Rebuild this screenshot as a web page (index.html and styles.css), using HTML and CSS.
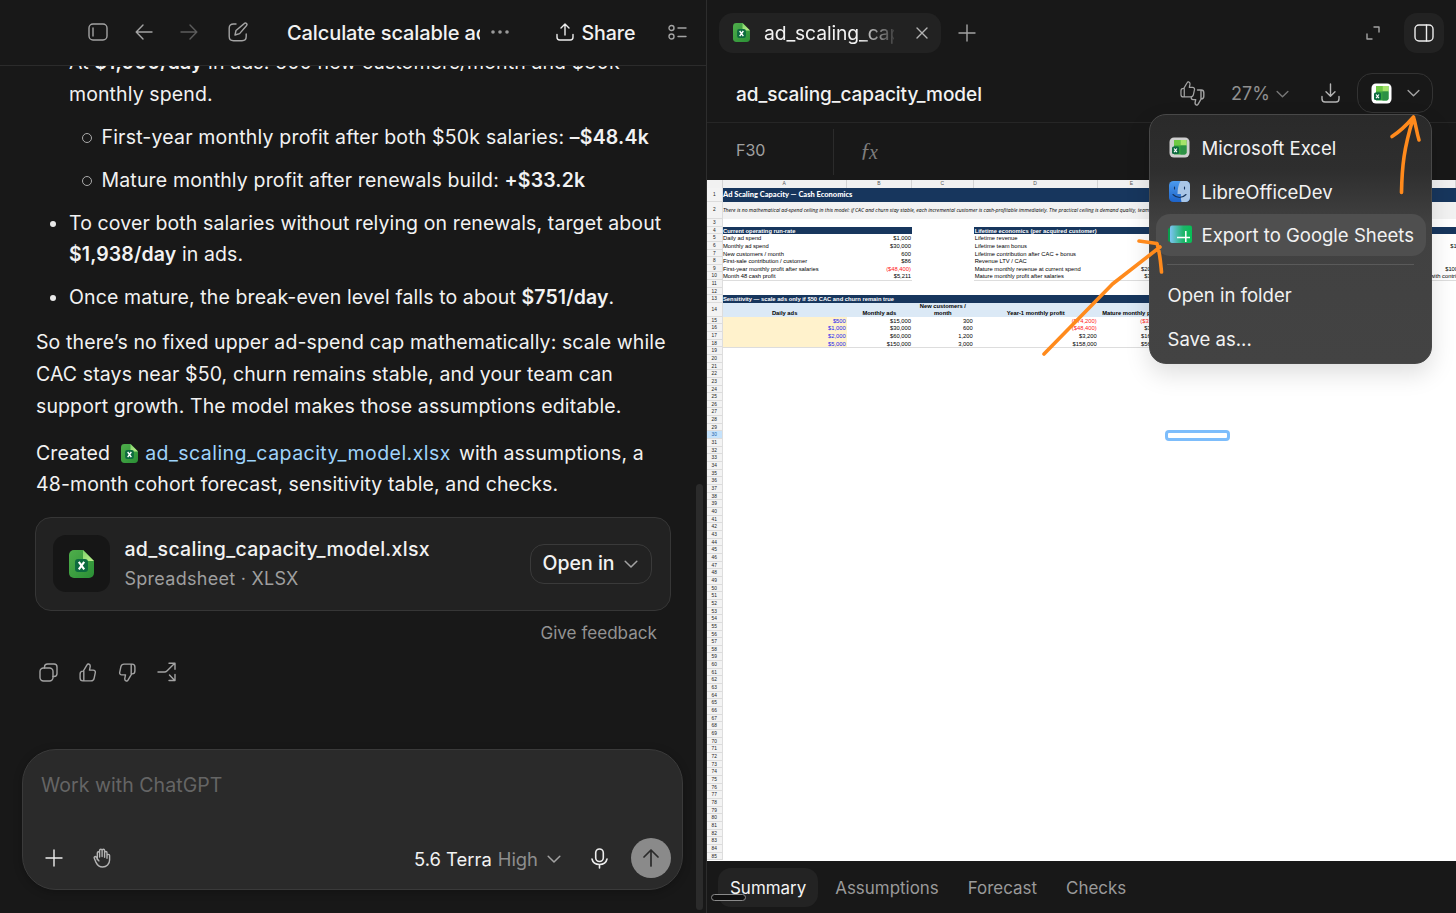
FILE: index.html
```html
<!DOCTYPE html>
<html lang="en">
<head>
<meta charset="utf-8">
<title>ad_scaling_capacity_model</title>
<link rel="stylesheet" href="styles.css">
</head>
<body>
<svg class="defs" width="0" height="0" aria-hidden="true">
  <defs>
    <linearGradient id="gFile" x1="0" y1="0" x2="1" y2="1"><stop offset="0" stop-color="#4fae4b"/><stop offset="1" stop-color="#2a8f35"/></linearGradient>
    <linearGradient id="gFold" x1="0" y1="0" x2="1" y2="1"><stop offset="0" stop-color="#7fd36a"/><stop offset="1" stop-color="#c3f08f"/></linearGradient>
    <linearGradient id="gSheet" x1="0" y1="0" x2="1" y2="0"><stop offset="0" stop-color="#7cc4f4"/><stop offset=".6" stop-color="#1fb56b"/><stop offset="1" stop-color="#06bf55"/></linearGradient>
    <linearGradient id="gFinder" x1="0" y1="0" x2="0" y2="1"><stop offset="0" stop-color="#4b9bee"/><stop offset="1" stop-color="#1d63c9"/></linearGradient>
    <symbol id="file" viewBox="0 0 25 28">
      <path d="M5 0h9l11 11v12a5 5 0 0 1-5 5H5a5 5 0 0 1-5-5V5a5 5 0 0 1 5-5z" fill="url(#gFile)"/>
      <path d="M14 0l11 11h-8a3 3 0 0 1-3-3z" fill="url(#gFold)"/>
      <rect x="6" y="9" width="13" height="13" rx="3" fill="#0d6b3f"/>
      <path d="M9.800 11.800l5.400 7.600M15.200 11.800l-5.400 7.600" stroke="#fff" stroke-width="2.100" fill="none"/>
    </symbol>
    <symbol id="excel" viewBox="0 0 21 21">
      <rect x=".5" y=".5" width="20" height="20" rx="4.500" fill="currentColor"/>
      <path d="M5 3h12.500v12.500a2 2 0 0 1-2 2H5z" fill="#37a23f"/>
      <path d="M5 3h6.500v5.500H5z" fill="#6fc944"/><path d="M11.500 3h6v5.500h-6z" fill="#a6e36b"/>
      <path d="M11.500 8.500h6v7a2 2 0 0 1-2 2h-4z" fill="#2d9145"/>
      <rect x="3" y="9.500" width="7" height="7.500" rx="1.500" fill="#0f6b41"/>
      <path d="M5.100 11.500l2.800 3.600M7.900 11.500l-2.800 3.600" stroke="#fff" stroke-width="1.200"/>
    </symbol>
    <symbol id="chev" viewBox="0 0 14 8"><path d="M1.200 1.200L7 7l5.800-5.800" fill="none" stroke="currentColor" stroke-width="1.500" stroke-linecap="round" stroke-linejoin="round"/></symbol>
    <symbol id="thumb" viewBox="0 0 18 19">
      <path d="M4.300 8.200L8 1.900c.4-.8 1-1.100 1.700-.9 1.200.4 1.700 1.400 1.500 2.600l-.7 3.500h3.700c1.500 0 2.400 1.200 2.100 2.600l-1.200 5.600c-.4 1.700-1.400 2.600-3.100 2.600H4.800M4.800 8.100v9.800H3.900c-1.700 0-2.800-1.200-2.800-2.900v-4c0-1.700 1.100-2.900 2.800-2.900z" fill="none" stroke="currentColor" stroke-width="1.400" stroke-linejoin="round" stroke-linecap="round"/>
    </symbol>
  </defs>
</svg>

<div class="app">
  <section class="chat">
    <header class="chat-head">
      <div class="nav">
        <svg class="ic" width="20" height="18" viewBox="0 0 20 18"><rect x="1" y="1" width="18" height="16" rx="4"/><path d="M5 5v8"/></svg>
        <svg class="ic" width="18" height="16" viewBox="0 0 18 16"><path d="M17 8H1.500M8 1L1.200 8 8 15"/></svg>
        <svg class="ic dim" width="18" height="16" viewBox="0 0 18 16"><path d="M1 8h15.500M10 1l6.800 7L10 15"/></svg>
        <svg class="ic" width="20" height="20" viewBox="0 0 20 20"><path d="M8 2H5.500C2.800 2 1.200 3.500 1.200 6v8.500c0 2.600 1.600 4.200 4.300 4.200H14c2.700 0 4.200-1.600 4.200-4.200V12"/><path d="M16.200 1.600c.8-.8 1.700-.7 2.300-.1s.6 1.600-.1 2.300L11.600 11.600 7 13l1-4.500z"/></svg>
      </div>
      <div class="chat-title"><span>Calculate scalable ad</span></div>
      <svg class="dots" width="18" height="4" viewBox="0 0 18 4"><circle cx="2" cy="2" r="1.800"/><circle cx="9" cy="2" r="1.800"/><circle cx="16" cy="2" r="1.800"/></svg>
      <div class="share">
        <svg class="ic bright" width="18" height="18" viewBox="0 0 18 18"><path d="M9 12V1.500M5 5l4-4 4 4M1 11.500v2.800C1 16 2 17 3.700 17h10.600c1.700 0 2.700-1 2.700-2.700v-2.800"/></svg>
        <span>Share</span>
      </div>
      <svg class="ic list" width="19" height="17" viewBox="0 0 19 17"><circle cx="3.500" cy="4" r="2.500"/><circle cx="3.500" cy="12.500" r="2.500"/><path d="M10 4h8M10 12.500h8"/></svg>
    </header>

    <div class="thread">
      <ul class="list1">
        <li><span class="l1">At <b>$1,000/day</b> in ads: 600 new customers/month and $30k</span><br>monthly spend.
          <ul class="list2">
            <li>First-year monthly profit after both $50k salaries: <b>–$48.4k</b></li>
            <li>Mature monthly profit after renewals build: <b>+$33.2k</b></li>
          </ul>
        </li>
        <li>To cover both salaries without relying on renewals, target about<br><b>$1,938/day</b> in ads.</li>
        <li>Once mature, the break-even level falls to about <b>$751/day</b>.</li>
      </ul>
      <p class="para">So there’s no fixed upper ad-spend cap mathematically: scale while<br>CAC stays near $50, churn remains stable, and your team can<br>support growth. The model makes those assumptions editable.</p>
      <p class="para second">Created <svg class="inline-file" width="17" height="19"><use href="#file"/></svg><a class="link">ad_scaling_capacity_model.xlsx</a> with assumptions, a<br>48-month cohort forecast, sensitivity table, and checks.</p>
      <div class="card">
        <div class="card-icon"><svg width="25" height="28"><use href="#file"/></svg></div>
        <div class="card-text"><div class="card-name">ad_scaling_capacity_model.xlsx</div><div class="card-sub">Spreadsheet · XLSX</div></div>
        <div class="open-in"><span>Open in</span><svg class="chev" width="14" height="8"><use href="#chev"/></svg></div>
      </div>
      <div class="feedback">Give feedback</div>
      <div class="actions">
        <svg class="ic" width="19" height="19" viewBox="0 0 19 19"><rect x="1" y="5" width="13" height="13" rx="3.500"/><path d="M5.500 5V4c0-2 1-3 3-3H15c2 0 3 1 3 3v6.500c0 2-1 3-3 3h-1"/></svg>
        <svg class="ic" width="18" height="19"><use href="#thumb"/></svg>
        <svg class="ic flip" width="18" height="19"><use href="#thumb"/></svg>
        <svg class="ic" width="19" height="20" viewBox="0 0 19 20"><path d="M1 10h6.500c1 0 1.700-.3 2.400-1L17.500 1.500M12 1.200h6v6M12.500 13l5 5.200M18 12.500v6h-6"/></svg>
      </div>
    </div>

    <div class="composer">
      <div class="placeholder">Work with ChatGPT</div>
      <div class="composer-row">
        <svg class="ic bright plus" width="18" height="18" viewBox="0 0 18 18"><path d="M9 1v16M1 9h16"/></svg>
        <svg class="ic soft hand" width="18" height="20" viewBox="0 0 18 20"><path d="M4.300 11.800V5c0-1.700 2.300-1.700 2.300 0v4M6.600 8V2.600c0-1.800 2.500-1.800 2.500 0V8.500M9.100 8V2.600c0-1.800 2.500-1.800 2.500 0v6.600M11.600 8V4.700c0-1.600 2.400-1.600 2.400 0v5.500M14 7.600c0-1.600 2.600-1.600 2.600 0V12c0 4-3 7-7 7-3.500 0-5.300-1.800-6.600-4.600L1.300 10.300c-.7-1.700 1.300-2.300 2-1l2.600 3.600"/></svg>
        <div class="model"><span>5.6 Terra</span><span class="high">High</span><svg class="chev" width="14" height="8"><use href="#chev"/></svg></div>
        <svg class="ic bright mic" width="17" height="21" viewBox="0 0 17 21"><rect x="4.700" y="1" width="7.600" height="12.500" rx="3.800"/><path d="M1 11c.8 3.600 3.600 5.500 7.500 5.500S15.200 14.600 16 11M8.500 16.500V20"/></svg>
        <div class="send"><svg width="18" height="18" viewBox="0 0 18 18"><path d="M9 17V1.500M2 8l7-7 7 7"/></svg></div>
      </div>
    </div>
    <div class="scroll-thumb"></div>
  </section>

  <section class="pane">
    <div class="tabs">
      <div class="tab"><svg width="17" height="19"><use href="#file"/></svg><span class="tab-name">ad_scaling_cap</span><svg class="ic soft" width="12" height="12" viewBox="0 0 12 12"><path d="M1 1l10 10M11 1L1 11"/></svg></div>
      <svg class="ic add" width="18" height="18" viewBox="0 0 18 18"><path d="M9 1v16M1 9h16"/></svg>
      <svg class="ic expand" width="14" height="14" viewBox="0 0 14 14"><path d="M8 1h5v5M1 8v5h5"/></svg>
      <div class="side-btn"><svg class="ic bright" width="20" height="18" viewBox="0 0 20 18"><rect x="1" y="1" width="18" height="16" rx="4"/><path d="M12.500 1v16"/></svg></div>
    </div>
    <div class="toolbar">
      <div class="doc-title">ad_scaling_capacity_model</div>
      <svg class="ic thumbs" width="25" height="25" viewBox="0 0 25 25"><use href="#thumb" x="0" y="0" width="16" height="17"/><path d="M17.500 9h3.700c1.700 0 2.600 1 2.600 2.700v3.600c0 1.700-1 2.700-2.700 2.700L18 23.300c-.4.800-1 .9-1.600.7-1.100-.4-1.500-1.300-1.300-2.400l.6-3H13c-1.200 0-1.800-.8-1.700-1.800M21 9v9"/></svg>
      <div class="zoom"><span>27%</span><svg class="chev" width="13" height="8"><use href="#chev"/></svg></div>
      <svg class="ic soft down" width="19" height="20" viewBox="0 0 19 20"><path d="M9.500 1v12M5 8.700l4.500 4.500L14 8.700M1 13.500v2.300C1 17.900 2 19 4 19h11c2 0 3-1.100 3-3.200v-2.300"/></svg>
      <div class="app-btn"><svg class="xl" width="21" height="21"><use href="#excel"/></svg><svg class="chev" width="13" height="8"><use href="#chev"/></svg></div>
    </div>
    <div class="formula"><div class="ref">F30</div><div class="fx">ƒ<i>x</i></div></div>

    <div class="sheet">
      <div class="cols"><span></span><span>A</span><span>B</span><span>C</span><span>D</span><span>E</span><span>F</span><span>G</span></div>
      <div class="body">
        <div class="nums" id="nums"></div>
        <div class="cells">
          <div class="r r1"><span>Ad Scaling Capacity — Cash Economics</span></div>
          <div class="r r2"><span>There is no mathematical ad-spend ceiling in this model: if CAC and churn stay stable, each incremental customer is cash-profitable immediately. The practical ceiling is demand quality, team</span></div>
          <div class="r"></div>
          <div class="r g head"><b class="navy ab">Current operating run-rate</b><b class="navy dg">Lifetime economics (per acquired customer)</b></div>
          <div class="r g"><span>Daily ad spend</span><span class="n">$1,000</span><span></span><span>Lifetime revenue</span></div>
          <div class="r g"><span>Monthly ad spend</span><span class="n">$30,000</span><span></span><span>Lifetime team bonus</span><span></span><span></span><span class="g6">$1</span></div>
          <div class="r g"><span>New customers / month</span><span class="n">600</span><span></span><span>Lifetime contribution after CAC + bonus</span></div>
          <div class="r g"><span>First-sale contribution / customer</span><span class="n">$86</span><span></span><span>Revenue LTV / CAC</span></div>
          <div class="r g"><span>First-year monthly profit after salaries</span><span class="n red">($48,400)</span><span></span><span>Mature monthly revenue at current spend</span><span class="n">$208,000</span><span></span><span class="g9">$100</span></div>
          <div class="r g end"><span>Month 48 cash profit</span><span class="n">$5,211</span><span class="gap"></span><span>Mature monthly profit after salaries</span><span class="n">$33,200</span><span></span><span class="g10">with contri</span></div>
          <div class="r"></div>
          <div class="r"></div>
          <div class="r g"><b class="navy af">Sensitivity — scale ads only if $50 CAC and churn remain true</b></div>
          <div class="r g r14"><b>Daily ads</b><b>Monthly ads</b><b>New customers /<br>month</b><b>Year-1 monthly profit</b><b>Mature monthly profit</b><b></b></div>
          <div class="r g s"><span class="n in">$500</span><span class="n">$15,000</span><span class="n">300</span><span class="n red">($74,200)</span><span class="n red">($33,400)</span></div>
          <div class="r g s"><span class="n in">$1,000</span><span class="n">$30,000</span><span class="n">600</span><span class="n red">($48,400)</span><span class="n">$33,200</span></div>
          <div class="r g s"><span class="n in">$2,000</span><span class="n">$60,000</span><span class="n">1,200</span><span class="n">$3,200</span><span class="n">$166,400</span></div>
          <div class="r g s last"><span class="n in">$5,000</span><span class="n">$150,000</span><span class="n">3,000</span><span class="n">$158,000</span><span class="n">$566,000</span></div>
        </div>
      </div>
      <div class="selection"></div>
    </div>

    <div class="sheet-tabs"><span class="on">Summary</span><span>Assumptions</span><span>Forecast</span><span>Checks</span></div>
    <div class="hscroll"></div>
  </section>
</div>

<div class="menu">
  <div class="item"><svg class="xl muted" width="21" height="21"><use href="#excel"/></svg><span class="m1">Microsoft Excel</span></div>
  <div class="item"><svg width="21" height="21" viewBox="0 0 21 21"><rect width="21" height="21" rx="4.500" fill="url(#gFinder)"/><path d="M11.500 0H16.500A4.500 4.500 0 0 1 21 4.500v12a4.500 4.500 0 0 1-4.500 4.500H12.500c-.6-2.500-.7-5-.6-8H8.500C8.600 8 9.500 3.500 11.500 0z" fill="#a9c6e6"/><path d="M5.500 6v2M15.500 6v2M4 13.500c3.800 4 9.200 4 13 0" stroke="#17365f" stroke-width="1.100" fill="none" stroke-linecap="round"/></svg><span class="m2">LibreOfficeDev</span></div>
  <div class="item hover"><svg width="24" height="19" viewBox="0 0 24 19"><path d="M0 4l4-3v17l-4-2z" fill="#0a9c4c"/><rect x="2" y=".5" width="22" height="17.500" rx="2" fill="url(#gSheet)"/><path d="M9 12.500h13M17.800 6v11" stroke="#fff" stroke-width="1.500"/></svg><span class="m3">Export to Google Sheets</span></div>
  <div class="sep"></div>
  <div class="item plain m4">Open in folder</div>
  <div class="item plain m5">Save as...</div>
</div>

<svg class="ink" width="1456" height="913" viewBox="0 0 1456 913">
  <path d="M1401.500 192.500C1402 166 1404 148 1413 119M1392 136.500c8-5 15-12 21.500-19.500 2.500 8 3 15 5.500 23"/>
  <path d="M1044 354L1112.500 284 1160 247M1139 241l18 2.500c3 9 3.500 18 4.500 28.500"/>
</svg>
<script src="rows.js"></script>
</body>
</html>
```
FILE: rows.js
```js
// Row-number gutter of the sheet: rows 1-85, with the tall rows marked.
const tall = { 1: 'h1', 2: 'h2', 3: 'h3', 14: 'h14', 30: 'active' };
const nums = document.getElementById('nums');
for (let i = 1; i <= 85; i++) {
  const d = document.createElement('div');
  d.textContent = i;
  if (tall[i]) d.className = tall[i];
  nums.appendChild(d);
}
```
FILE: styles.css
```css
* { box-sizing: border-box; }
body { margin: 0; background: #181818; color: #f2f2f2; font-family: Inter, "Liberation Sans", sans-serif; overflow: hidden; }
.defs { display: block; position: absolute; }
svg { flex: none; display: block; }
b { font-weight: 600; }
.app { display: flex; width: 1456px; height: 913px; }
.ic { fill: none; stroke: #a3a3a3; color: #a3a3a3; stroke-width: 1.4; stroke-linecap: round; stroke-linejoin: round; }
.ic.dim { stroke: #5c5c5c; }
.ic.soft { stroke: #b4b4b4; }
.ic.bright { stroke: #ededed; }
.chev { color: #a3a3a3; }

/* chat */
.chat { position: relative; width: 707px; height: 913px; border-right: 1px solid #2d2d2d; display: flex; flex-direction: column; }
.chat-head { height: 66px; flex: none; border-bottom: 1px solid #2b2b2b; display: flex; align-items: center; padding: 0 0 1px 87.500px; font-size: 20px; }
.nav { display: flex; align-items: center; width: 199.500px; }
.nav svg:nth-child(2) { margin-left: 27px; }
.nav svg:nth-child(3) { margin-left: 27.500px; }
.nav svg:nth-child(4) { margin-left: 29.500px; }
.chat-title { width: 193px; overflow: hidden; white-space: nowrap; font-weight: 500; letter-spacing: -.1px; line-height: 30px; padding-top: 1px; }
.dots { fill: #9a9a9a; margin-left: 11px; }
.share { display: flex; align-items: center; gap: 8px; margin-left: 46.500px; width: 101px; font-weight: 500; font-size: 19.600px; white-space: nowrap; letter-spacing: -.1px; }
.share span { padding-top: 1px; }
.list { margin-left: 11px; }
.thread { height: 683px; flex: none; overflow: hidden; font-size: 19.500px; line-height: 31.650px; letter-spacing: .11px; white-space: nowrap; padding-left: 36px; }
ul { list-style: none; margin: 0; padding: 0; }
.list1 { margin-top: -19px; padding-left: 33px; }
.list1 > li { position: relative; margin-bottom: 11.300px; }
.list1 > li::before { content: ""; position: absolute; left: -19px; top: 13px; width: 6px; height: 6px; border-radius: 50%; background: #e8e8e8; }
.list2 { padding: 11.300px 0 0 32.500px; letter-spacing: .19px; }
.list2 li { position: relative; margin-bottom: 11.300px; }
.list2 li:nth-child(2) { letter-spacing: .15px; }
.list2 li::before { content: ""; position: absolute; left: -20px; top: 11px; width: 8px; height: 8px; border-radius: 50%; border: 1px solid #aaa; }
.para { margin: 13.500px 0 0; }
.para.second { margin-top: 15.500px; }
.inline-file { display: inline-block; vertical-align: -3px; margin: 0 7px 0 5.500px; }
.link { color: #9fd3fb; margin-right: 2.500px; letter-spacing: .46px; }
.card { margin-top: 15.500px; width: 636px; height: 94px; border: 1px solid #363636; border-radius: 16px; background: #222; margin-left: -1px; display: flex; align-items: center; padding: 0 18px 0 17px; }
.card-icon { width: 57px; height: 57px; border-radius: 13px; background: #161616; display: flex; align-items: center; justify-content: center; }
.card-text { margin-left: 14.500px; flex: 1; line-height: 29.500px; padding-top: 1.500px; }
.card-name { font-weight: 500; letter-spacing: .28px; }
.card-sub { color: #9f9f9f; font-size: 18px; letter-spacing: .27px; }
.open-in { width: 122px; height: 40px; border: 1px solid #3a3a3a; border-radius: 14px; display: flex; align-items: center; gap: 9px; padding-left: 11.500px; font-weight: 500; letter-spacing: 0; }
.feedback { color: #939393; font-size: 17.100px; width: 621px; text-align: right; line-height: 24px; margin-top: 10px; letter-spacing: 0; }
.actions { display: flex; align-items: center; gap: 21px; margin: 16.500px 0 0 3px; height: 22px; }
.flip { transform: scaleY(-1) scaleX(-1); }
.composer { margin-left: 22px; width: 661px; height: 141px; border: 1px solid #3a3a3a; border-radius: 34px; background: #2a2a2a; box-shadow: 0 2px 8px rgba(0,0,0,.25); padding: 20px 11px 0 18px; font-size: 19.500px; }
.placeholder { color: #656565; line-height: 30px; letter-spacing: .05px; }
.composer-row { display: flex; align-items: center; height: 40px; margin-top: 38px; padding-left: 4px; }
.hand { margin-left: 30px; }
.model { display: flex; align-items: center; margin-left: 303px; width: 147px; font-size: 18.400px; white-space: nowrap; padding-top: 1px; }
.high { color: #8e8e8e; margin: 0 9px 0 6px; }
.mic { margin-left: 30px; stroke-width: 1.600; }
.send { margin-left: auto; width: 40px; height: 40px; border-radius: 50%; background: #8a8a8a; display: flex; align-items: center; justify-content: center; }
.send path { fill: none; stroke: #2a2a2a; stroke-width: 1.700; stroke-linecap: round; stroke-linejoin: round; }
.scroll-thumb { position: absolute; left: 696px; top: 484px; width: 7px; height: 426px; border-radius: 4px; background: #2b2b2b; }

/* document pane */
.pane { position: relative; width: 749px; height: 913px; display: flex; flex-direction: column; }
.tabs { height: 66px; display: flex; align-items: center; padding: 0 12px 1px; }
.tab { width: 222px; height: 40px; border-radius: 14px; background: #222; display: flex; align-items: center; padding-left: 14px; }
.tab-name { margin: 0 22px 0 14px; width: 130px; overflow: hidden; white-space: nowrap; font-size: 19.300px; letter-spacing: -.12px; line-height: 28px; -webkit-mask-image: linear-gradient(90deg, #000 72%, rgba(0,0,0,.15) 100%); mask-image: linear-gradient(90deg, #000 72%, rgba(0,0,0,.15) 100%); }
.add { margin-left: 17px; }
.expand { margin-left: auto; }
.side-btn { width: 40px; height: 40px; border-radius: 13px; background: #222; margin-left: 24px; display: flex; align-items: center; justify-content: center; }
.toolbar { height: 57px; border-bottom: 1px solid #262626; display: flex; align-items: center; padding: 0 23px 2px 29px; }
.doc-title { font-size: 19px; letter-spacing: -.06px; font-weight: 500; width: 444px; padding-top: 3px; }
.zoom { display: flex; align-items: center; gap: 6px; color: #8f8f8f; font-size: 18px; margin-left: 26px; width: 64px; padding-top: 1px; }
.zoom .chev { color: #777; }
.down { margin-left: 26px; }
.app-btn { margin-left: auto; width: 76px; height: 40px; border: 1px solid #333; border-radius: 15px; display: flex; align-items: center; padding-left: 13px; gap: 15px; }
.xl { color: #fff; }
.xl.muted { color: #cfcfcf; }
.formula { height: 57px; display: flex; align-items: center; color: #a0a0a0; }
.ref { width: 127px; height: 46px; border-right: 1px solid #2b2b2b; padding-left: 29px; line-height: 43px; font-size: 16px; }
.fx { padding: 0 0 3px 26px; font: italic 22px "Liberation Serif", serif; color: #7d7d7d; }
.fx i { position: relative; top: 2px; left: -2px; font-size: 20px; }

/* sheet */
.sheet { position: relative; height: 681px; background: #fff; color: #000; font: 5.800px/9px "Liberation Sans", sans-serif; overflow: hidden; white-space: nowrap; }
.cols { display: grid; grid-template-columns: 15.500px 124.300px 65.200px 61.700px 124px 68.500px 64px 1fr; height: 8px; background: #f1f1f1; color: #555; font-size: 5px; line-height: 7.500px; text-align: center; }
.cols span { border-right: 1px solid #d4d4d4; border-bottom: 1px solid #d9d9d9; }
.body { display: flex; }
.nums { width: 15.500px; background: #f3f3f3; border-right: 1px solid #ddd; font-size: 4.800px; text-align: center; color: #222; }
.nums div { height: 7.660px; line-height: 8.600px; border-bottom: 1px solid #dcdcdc; }
.nums .h1 { height: 14.200px; line-height: 14.200px; }
.nums .h2 { height: 16.700px; line-height: 16.700px; }
.nums .h14 { height: 13.500px; line-height: 13.500px; }
.nums .active { background: #c5e2fb; color: #1a5fa8; }
.cells { width: 733.500px; }
.r { height: 7.660px; }
.r1 { height: 14.200px; line-height: 14.800px; background: #17365d; color: #fff; font-family: Lato, sans-serif; font-weight: 900; font-size: 7.500px; padding-left: .5px; }
.r2 { height: 16.700px; line-height: 17.500px; background: #f2f2f2; font-family: "Open Sans", sans-serif; font-style: italic; font-size: 5.100px; padding-left: .5px; overflow: hidden; }
.g { display: grid; grid-template-columns: 124.300px 65.200px 61.700px 124px 68.500px 64px 1fr; }
.g > * { padding: 0 1px; height: 7.660px; }
.g > :first-child { padding-left: .5px; }
.g b { font-weight: 700; }
.navy { background: #17365d; color: #fff; }
.ab { grid-column: 1 / 3; }
.dg { grid-column: 4 / 8; }
.af { grid-column: 1 / 7; }
.n { text-align: right; }
.red { color: #ff2020; }
.end > span:not(.gap) { box-shadow: 0 1px 0 #ddd; }
.g > .g6 { padding-left: 220px; }
.g > .g9 { padding-left: 215px; }
.g > .g10 { padding-left: 200px; }
.r14 { height: 13.500px; line-height: 6.600px; }
.g.r14 > b { height: 13.500px; background: #dbe9f6; text-align: center; display: flex; align-items: flex-end; justify-content: center; padding: 0; }
.in { background: #fff2cc; color: #1d1df0; }
.last > span { box-shadow: 0 1px 0 #ddd; }
.selection { position: absolute; left: 458px; top: 250px; width: 65px; height: 11px; border: 3px solid #7dbdfb; border-radius: 4px; }
.sheet-tabs { height: 52px; display: flex; align-items: center; padding-left: 11px; font-size: 16.950px; color: #9a9a9a; }
.sheet-tabs span { height: 39px; line-height: 40px; padding: 0 12px; border-radius: 13px; margin-right: 5px; }
.sheet-tabs .on { background: #232323; color: #f4f4f4; }
.hscroll { position: absolute; left: 4px; top: 894px; width: 35px; height: 7px; border: 1px solid #8a8a8a; border-radius: 4px; background: #101010; }

/* open-with menu */
.menu { position: absolute; left: 1149px; top: 114px; width: 283px; height: 250px; border-radius: 17px; border: 1px solid #484848; background: linear-gradient(#2a2a2a 0, #2e2e2e 22%, #414141 44%, #434343 100%); box-shadow: 0 10px 24px rgba(0,0,0,.13); padding: 11px 5px 0 6px; font-size: 18.550px; }
.item { height: 43.800px; display: flex; align-items: center; padding-left: 13px; white-space: nowrap; }
.item span { margin-left: 11.500px; }
.item.hover { height: 42px; margin-top: 0; border-radius: 14px; background: #4f4f4f; padding-left: 12px; }
.hover span { margin-left: 9.500px; }
.sep { height: 1px; background: #5a5a5a; margin: 8px 12px 8.500px 11px; }
.item.plain { padding-left: 11.500px; }
.ink { position: absolute; left: 0; top: 0; pointer-events: none; fill: none; stroke: #ff8a1c; stroke-width: 3.600; stroke-linecap: round; stroke-linejoin: round; }
```
